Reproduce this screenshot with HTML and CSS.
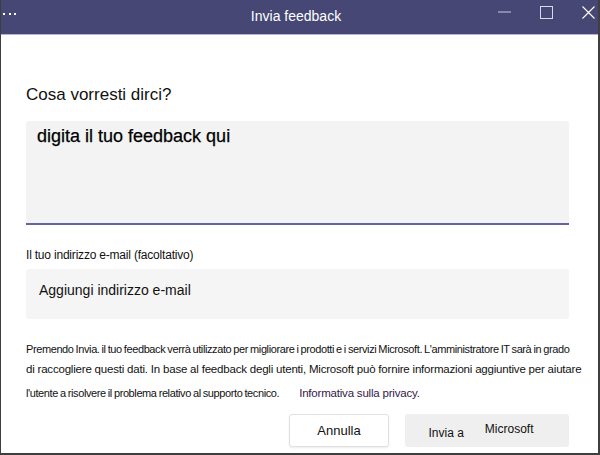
FILE: index.html
```html
<!DOCTYPE html>
<html lang="it">
<head>
  <meta charset="UTF-8">
  <meta name="viewport" content="width=device-width, initial-scale=1.0">
  <title>Invia feedback</title>
  <link rel="stylesheet" href="styles.css">
</head>
<body>
  <div class="window">

    <!-- Title Bar -->
    <div class="titlebar">
      <div class="title-left">
        <svg class="dots" width="16" height="4" viewBox="0 0 16 4">
          <rect x="2" y="1" width="2" height="2" fill="#fff"/>
          <rect x="8" y="1" width="2" height="2" fill="#fff"/>
          <rect x="13" y="1" width="2" height="2" fill="#fff"/>
        </svg>
      </div>
      <div class="title">Invia feedback</div>
      <div class="controls">
        <svg width="13" height="14" viewBox="0 0 13 14">
          <line x1="0" y1="6" x2="13" y2="6" stroke="#c9c9dc" stroke-width="1"/>
        </svg>
        <svg width="13" height="14" viewBox="0 0 13 14">
          <rect x="0.5" y="0.5" width="12" height="12" fill="none" stroke="#d8d8e6" stroke-width="1"/>
        </svg>
        <svg width="13" height="14" viewBox="0 0 13 14">
          <path d="M0.5 0.5 L12.5 12.5 M12.5 0.5 L0.5 12.5" stroke="#fff" stroke-width="1.1"/>
        </svg>
      </div>
    </div>

    <!-- Form -->
    <div class="content">
      <h2 class="question">Cosa vorresti dirci?</h2>

      <div class="feedback-box">digita il tuo feedback qui</div>

      <label class="email-label">Il tuo indirizzo e-mail (facoltativo)</label>
      <div class="email-box">Aggiungi indirizzo e-mail</div>

      <div class="note">
        <div class="note-line tight">Premendo Invia. il tuo feedback verrà utilizzato per migliorare i prodotti e i servizi Microsoft. L'amministratore IT sarà in grado</div>
        <div class="note-line wide">di raccogliere questi dati. In base al feedback degli utenti, Microsoft può fornire informazioni aggiuntive per aiutare</div>
        <div class="note-line last"><span class="tight">l'utente a risolvere il problema relativo al supporto tecnico.</span><a class="privacy wide" href="#">Informativa sulla privacy.</a></div>
      </div>

      <div class="actions">
        <button class="btn btn-cancel">Annulla</button>
        <button class="btn btn-send"><span class="send-a">Invia a</span><span class="send-b">Microsoft</span></button>
      </div>
    </div>

  </div>
</body>
</html>
```

FILE: styles.css
```css
/* General */
* {
  box-sizing: border-box;
}

body {
  margin: 0;
  font-family: 'Liberation Sans', Arial, sans-serif;
  color: #201f1e;
  background: #fff;
}

.window {
  width: 600px;
  height: 455px;
  border-left: 1px solid #3f3f3f;
  border-right: 2px solid #3f3f3f;
  border-bottom: 2px solid #3f3f3f;
  display: flex;
  flex-direction: column;
}

/* Title Bar */
.titlebar {
  height: 35px;
  background: #464775;
  border-bottom: 1px solid #b4b4d4;
  display: grid;
  grid-template-columns: 1fr auto 1fr;
  align-items: start;
  color: #fff;
}

.title-left {
  padding-top: 12px;
}

.dots {
  display: block;
}

.title {
  font-size: 14px;
  line-height: 16px;
  padding-top: 8px;
  margin-right: 7px;
}

.controls {
  display: flex;
  justify-content: flex-end;
  gap: 29px;
  padding-top: 6px;
  padding-right: 3px;
}

.controls svg {
  display: block;
}

/* Content */
.content {
  padding: 50px 29px 0 25px;
}

.question {
  margin: 0;
  font-size: 17px;
  font-weight: normal;
  line-height: 20px;
  color: #111;
}

.feedback-box {
  margin-top: 16px;
  height: 104px;
  padding: 4px 11px 0;
  background: #f3f3f3;
  border-radius: 3px 3px 0 0;
  border-bottom: 2px solid #6264a7;
  font-size: 18px;
  line-height: 22px;
  color: #000;
  -webkit-text-stroke: 0.25px #000;
}

.email-label {
  display: block;
  margin-top: 22px;
  font-size: 12px;
  line-height: 16px;
  letter-spacing: -0.2px;
  color: #111;
}

.email-box {
  margin-top: 6px;
  height: 50px;
  padding: 11px 13px 0;
  background: #f5f5f5;
  border-radius: 3px;
  font-size: 14px;
  line-height: 20px;
  color: #111;
}

/* Notice */
.note {
  margin-top: 20px;
  color: #111;
}

.note-line {
  height: 20px;
  line-height: 20px;
  white-space: nowrap;
}

.note-line.last {
  margin-top: 3px;
}

.tight {
  font-size: 11px;
  letter-spacing: -0.4px;
  word-spacing: -0.6px;
}

.wide {
  font-size: 11.5px;
  letter-spacing: -0.2px;
}

.privacy {
  margin-left: 20px;
  color: #33184a;
  text-decoration: none;
}

/* Buttons */
.actions {
  margin-top: 12px;
  display: flex;
  justify-content: flex-end;
  gap: 16px;
}

.btn {
  height: 33px;
  border-radius: 3px;
  font-family: inherit;
  color: #111;
  padding: 0;
  cursor: pointer;
}

.btn-cancel {
  width: 100px;
  background: #fff;
  border: 1px solid #e1e1e1;
  box-shadow: 0 1px 2px rgba(0, 0, 0, 0.08);
  font-size: 13px;
}

.btn-send {
  width: 164px;
  background: #efefef;
  border: none;
  font-size: 12px;
  display: flex;
  align-items: center;
  justify-content: center;
  padding-right: 12px;
}

.send-a {
  margin-top: 4px;
}

.send-b {
  margin-left: 21px;
  margin-bottom: 4px;
}
```
